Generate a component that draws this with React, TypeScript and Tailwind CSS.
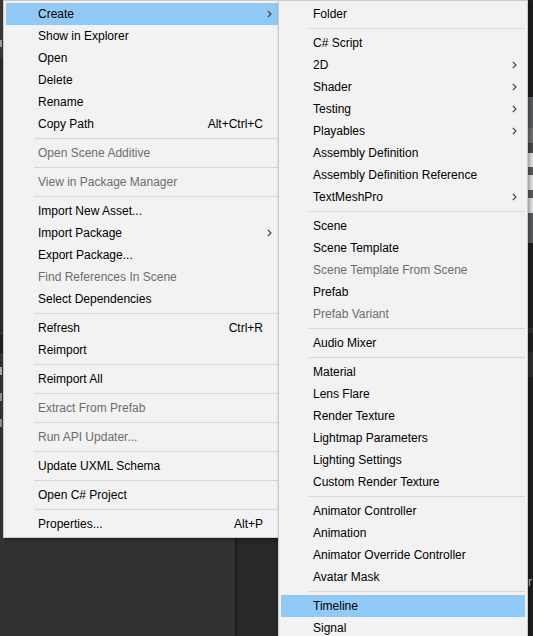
import * as React from "react"

type Item =
  | "sep"
  | {
      label: string
      shortcut?: string
      arrow?: boolean
      disabled?: boolean
      active?: boolean
    }

const mainItems: Item[] = [
  { label: "Create", arrow: true, active: true },
  { label: "Show in Explorer" },
  { label: "Open" },
  { label: "Delete" },
  { label: "Rename" },
  { label: "Copy Path", shortcut: "Alt+Ctrl+C" },
  "sep",
  { label: "Open Scene Additive", disabled: true },
  "sep",
  { label: "View in Package Manager", disabled: true },
  "sep",
  { label: "Import New Asset..." },
  { label: "Import Package", arrow: true },
  { label: "Export Package..." },
  { label: "Find References In Scene", disabled: true },
  { label: "Select Dependencies" },
  "sep",
  { label: "Refresh", shortcut: "Ctrl+R" },
  { label: "Reimport" },
  "sep",
  { label: "Reimport All" },
  "sep",
  { label: "Extract From Prefab", disabled: true },
  "sep",
  { label: "Run API Updater...", disabled: true },
  "sep",
  { label: "Update UXML Schema" },
  "sep",
  { label: "Open C# Project" },
  "sep",
  { label: "Properties...", shortcut: "Alt+P" },
]

const createItems: Item[] = [
  { label: "Folder" },
  "sep",
  { label: "C# Script" },
  { label: "2D", arrow: true },
  { label: "Shader", arrow: true },
  { label: "Testing", arrow: true },
  { label: "Playables", arrow: true },
  { label: "Assembly Definition" },
  { label: "Assembly Definition Reference" },
  { label: "TextMeshPro", arrow: true },
  "sep",
  { label: "Scene" },
  { label: "Scene Template" },
  { label: "Scene Template From Scene", disabled: true },
  { label: "Prefab" },
  { label: "Prefab Variant", disabled: true },
  "sep",
  { label: "Audio Mixer" },
  "sep",
  { label: "Material" },
  { label: "Lens Flare" },
  { label: "Render Texture" },
  { label: "Lightmap Parameters" },
  { label: "Lighting Settings" },
  { label: "Custom Render Texture" },
  "sep",
  { label: "Animator Controller" },
  { label: "Animation" },
  { label: "Animator Override Controller" },
  { label: "Avatar Mask" },
  "sep",
  { label: "Timeline", active: true },
  { label: "Signal" },
]

function Chevron() {
  return (
    <svg width="5" height="8" viewBox="0 0 5 8" className="mr-[8px] shrink-0">
      <path d="M0.8 0.8 L4 4 L0.8 7.2" fill="none" stroke="#3c3c3c" strokeWidth="1.1" />
    </svg>
  )
}

function Menu({ items, className }: { items: Item[]; className: string }) {
  return (
    <div
      className={`absolute border border-[#cccccc] bg-[#f2f2f2] p-[2px] shadow-[2px_2px_4px_rgba(0,0,0,0.35)] ${className}`}
    >
      {items.map((item, i) =>
        item === "sep" ? (
          <div key={i} className="flex h-[7px] items-center">
            <div className="ml-[28px] h-px flex-1 bg-[#d7d7d7]" />
          </div>
        ) : (
          <div
            key={i}
            className={`flex h-[22px] items-center pl-[32px] ${item.active ? "bg-[#91c9f7]" : ""} ${
              item.disabled ? "text-[#6d6d6d]" : "text-black"
            }`}
          >
            <span className="flex-1 whitespace-nowrap leading-[22px]">{item.label}</span>
            {item.shortcut && <span className="mr-[17px] whitespace-nowrap">{item.shortcut}</span>}
            {item.arrow && <Chevron />}
          </div>
        ),
      )}
    </div>
  )
}

export default function App() {
  return (
    <div className="relative h-[636px] w-[533px] overflow-hidden text-[12px] font-['Liberation_Sans',Arial,sans-serif]">
      {/* editor behind the menu */}
      <div className="flex h-full w-full">
        <div className="flex w-[235px] flex-col">
          <div className="flex h-[57px] flex-col bg-[#383838] pt-[40px]">
            <div className="h-[7px] w-[2px] bg-[#9a9a9a]" />
          </div>
          <div className="h-[276px] bg-[#2b2b2b]" />
          <div className="h-[20px] border-t border-[#444] bg-[#1f1f1f]" />
          <div className="flex flex-1 flex-col gap-[18px] bg-[#323232] pt-[14px]">
            <div className="h-[8px] w-[2px] bg-[#a8a8a8]" />
            <div className="h-[8px] w-[2px] bg-[#8c8c8c]" />
            <div className="h-[8px] w-[2px] bg-[#8c8c8c]" />
          </div>
        </div>
        <div className="w-[2px] bg-[#1b1b1b]" />
        <div className="flex-1 bg-[#282828]" />
        <div className="flex w-[6px] flex-col bg-[#202020]">
          <div className="h-[97px] bg-[#1e1e1e]" />
          <div className="h-[31px] bg-[#5b5f63]" />
          <div className="h-[15px] bg-[#707070]" />
          <div className="h-[10px] bg-[#4a4a4a]" />
          <div className="h-[14px] bg-[#e8e8e8]" />
          <div className="h-[8px] bg-[#5b5b5b]" />
          <div className="h-[15px] bg-[#e8e8e8]" />
          <div className="h-[8px] bg-[#5b5b5b]" />
          <div className="h-[15px] bg-[#e8e8e8]" />
          <div className="h-[30px] bg-[#5b5f63]" />
          <div className="h-[85px]" />
          <div className="h-[5px] bg-[#303030]" />
          <div className="h-[19px]" />
          <div className="h-[25px] bg-[#2e2e2e]" />
          <div className="h-[198px]" />
          <span className="pl-[1px] leading-[14px] text-[#c8c8c8]">r</span>
        </div>
      </div>

      <Menu items={mainItems} className="left-[3px] top-0 w-[280px]" />
      <Menu items={createItems} className="left-[278px] top-0 w-[250px]" />
    </div>
  )
}
